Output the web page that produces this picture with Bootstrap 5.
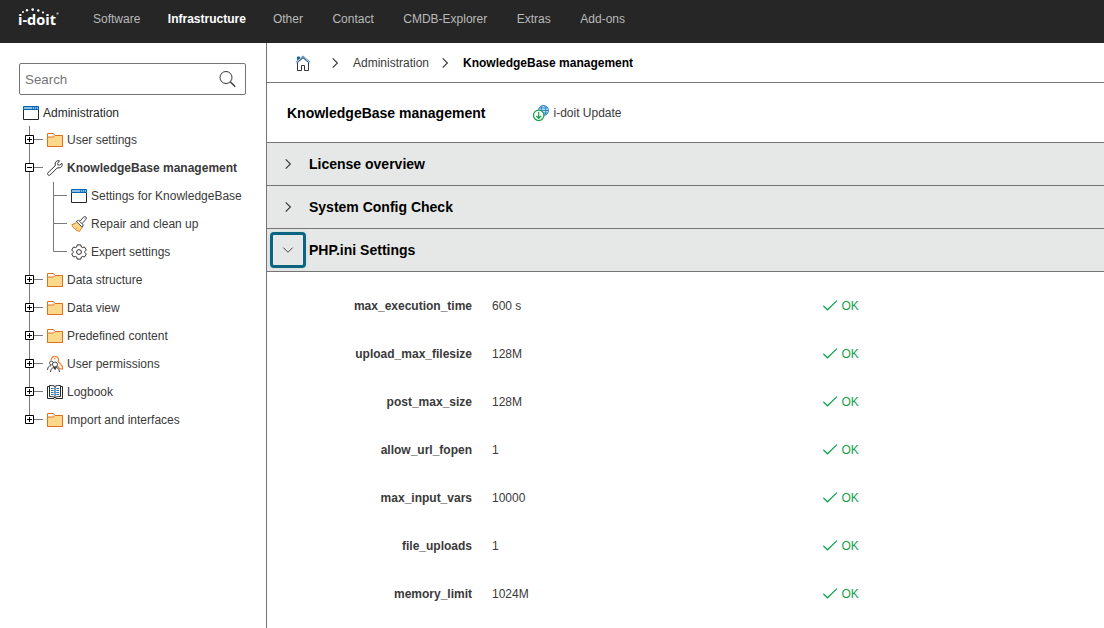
<!DOCTYPE html>
<html lang="en">
<head>
<meta charset="utf-8">
<title>i-doit</title>
<link rel="stylesheet" href="https://cdn.jsdelivr.net/npm/bootstrap@5.3.0/dist/css/bootstrap.min.css">
<script src="https://cdn.jsdelivr.net/npm/bootstrap@5.3.0/dist/js/bootstrap.bundle.min.js"></script>
<style>
body{font:12px/18px "Liberation Sans",Arial,sans-serif;color:#3a3a3a;height:100vh;overflow:hidden}
svg{flex:none;display:block}
.topbar{height:43px;background:#262626;padding:0 0 5px 16px}
.topbar .navbar-nav .nav-link{padding:0;color:#b9b9b9;font-size:12px}
.topbar .navbar-nav .nav-link.active{color:#fff;font-weight:700;margin:0 -1px 0 -.5px}
.topbar .navbar-nav{gap:28px;margin-left:29px}
.topbar .navbar-nav .nav-link:nth-child(n+4){margin-left:1.5px}
.side{width:267px;border-right:1px solid #757575;padding-top:20px}
.searchbox{margin:0 20px 0 19px;height:32px;border:1px solid #757575;border-radius:2px;padding:0 9px 0 5px}
.searchbox input{font-size:13.333px;color:#333;min-width:0;line-height:18px;margin-top:1px}
.searchbox input::placeholder{color:#757575}
.tree li{height:28px;padding-left:25px}
.tree li.root{height:26px;padding-left:23px;margin-top:5px;color:#262626}
.tree span{margin-left:4px;white-space:nowrap}
.crumbs{height:40px;border-bottom:1px solid #757575;padding-left:28px}
.headline{height:60px;border-bottom:1px solid #757575;padding-left:20px}
h1,h2{font-size:14px;font-weight:700;line-height:18px;color:#000;margin:0}
.headline h1{width:246px}
.section-bar{height:43px;background:#e6e8e7;border-bottom:1px solid #757575;padding-left:3px}
.toggle{width:36px;height:36px;border:3px solid transparent;border-radius:4px;background:none;padding:0;margin-right:3px}
.toggle.on{border-color:#0b6580;box-shadow:0 0 5px #0b658018}
.settings{padding-top:10px}
.setting{height:48px}
.setting b{width:205px;text-align:right;margin-right:20px}
.setting .val{width:329.5px}
.setting svg{margin-bottom:2px}
.ok{color:#14a04a}
</style>
</head>
<body class="d-flex flex-column bg-white">
<svg width="0" height="0" class="position-absolute" aria-hidden="true">
<defs>
<symbol id="plus" viewBox="0 0 22 28"><path d="M4.500 0V28M9 13.500H18" stroke="#7a7a7a" fill="none"/><path d="M.5 9.500h8v8h-8z" fill="#fff" stroke="#000"/><path d="M2 13.500h5M4.500 11v5" stroke="#000"/></symbol>
<symbol id="pluslast" viewBox="0 0 22 28"><path d="M4.500 0V10M9 13.500H18" stroke="#7a7a7a" fill="none"/><path d="M.5 9.500h8v8h-8z" fill="#fff" stroke="#000"/><path d="M2 13.500h5M4.500 11v5" stroke="#000"/></symbol>
<symbol id="minus" viewBox="0 0 22 28"><path d="M4.500 0V28M9 13.500H18" stroke="#7a7a7a" fill="none"/><path d="M.5 9.500h8v8h-8z" fill="#fff" stroke="#000"/><path d="M2 13.500h5" stroke="#000"/></symbol>
<symbol id="branch" viewBox="0 0 46 28"><path d="M4.500 0V28M28.500 0V28M28.500 13.500H42" stroke="#7a7a7a" fill="none"/></symbol>
<symbol id="branchlast" viewBox="0 0 46 28"><path d="M4.500 0V28M28.500 0V13.500H42" stroke="#7a7a7a" fill="none"/></symbol>
<symbol id="folder" viewBox="0 0 16 16"><path d="M.5 14.500V1.500H6.500L8 3.500H15.500V14.500z" fill="#fff" stroke="#e2711d"/><path d="M.5 14.500V5H6.500L8 3.500H15.500V14.500z" fill="#fad98b" stroke="#e2711d"/></symbol>
<symbol id="window" viewBox="0 0 16 16"><path d="M.5 4.500V14.500H15.500V4.500" fill="#fff" stroke="#262626"/><path d="M.5 1.500H15.500V4.500H.5z" fill="#83beec" stroke="#0063b1"/><path d="M9.500 2v2M11.500 2v2M13.500 2v2" stroke="#0063b1" stroke-width=".7"/></symbol>
<symbol id="wrench" viewBox="0 0 16 16"><path d="M14.900 3.300 12.600 5.200 10.900 4.800 10.600 3.200 12.500.8C10.100 0 7.600 2 8.300 5L8 6 1.100 12.500C-.4 14.200 1.800 16.400 3.300 14.900L9.800 8.300 11 7.800C14 8.400 16 5.900 14.900 3.300z" fill="#fff" stroke="#333"/></symbol>
<symbol id="brush" viewBox="0 0 16 16"><path d="M5.500 5.800.8 8.800C2 12 5 14.800 8.500 15.400L11.200 11z" fill="#fad98b"/><path d="M5 7 .8 8.800C2 12 5 14.800 8.500 15.400L11 11.500" fill="none" stroke="#e2711d" stroke-width=".9"/><path d="M5 13 6.500 11.500" stroke="#e2711d" stroke-width=".7"/><path d="M5.300 5.500 7.500 4.200 9 5.300 12.700.9C14.300-.2 16.100 1.500 15 3.200L11.200 7.500 12.300 9 11.200 11.200z" fill="#fff" stroke="#333" stroke-width=".9"/><path d="M8.500 5.500 11.300 8M13.500 2.200v.4" stroke="#333" stroke-width=".8"/></symbol>
<symbol id="gear" viewBox="0 0 16 16"><path d="M6.200.9H9.800L10.300 3 11.300 3.600 13.500 3 15.300 6 13.800 7.500V8.500L15.300 10 13.500 13 11.300 12.400 10.300 13 9.800 15.100H6.200L5.700 13 4.700 12.400 2.500 13 .7 10 2.200 8.500V7.500L.7 6 2.500 3 4.700 3.600 5.700 3z" fill="#fff" stroke="#333" stroke-linejoin="round"/><circle cx="8" cy="8" r="2.400" fill="none" stroke="#333"/></symbol>
<symbol id="perm" viewBox="0 0 16 16"><path d="M4.300 4.500C3.600 1 7.500-.5 9.800.8 11.600 2 11.700 4.100 11.100 5.300L15.400 10.300V12.800H13L8.500 8" fill="#fff" stroke="#f08030" stroke-width="1.200"/><path d="M7 2.800h1.500" stroke="#e2711d"/><circle cx="4.400" cy="7" r="1.900" fill="#fff" stroke="#333" stroke-width=".8"/><path d="M.6 14C.5 11 2 9.800 4 9.700" fill="none" stroke="#333" stroke-width=".9"/><circle cx="8" cy="8.500" r="2.500" fill="#fff" stroke="#333" stroke-width=".9"/><path d="M3.600 16C3.700 12.500 5.500 11.500 8 11.500S12.300 12.500 12.400 16M7 11.700 8 13.500 9 11.700" fill="none" stroke="#333"/></symbol>
<symbol id="book" viewBox="0 0 16 16"><path d="M2.500 2.500H.5V14.500H7L8 15.500 9 14.500H15.500V2.500H13.500" fill="#fff" stroke="#262626"/><path d="M8 2.500C7 1.500 5 1.500 2.500 1.500V12.500C5 12.500 7 12.500 8 14 9 12.500 11 12.500 13.500 12.500V1.500C11 1.500 9 1.500 8 2.500V14" fill="#fff" stroke="#262626"/><path d="M4 4.500H6.600M4 6.500H6.600M4 8.500H6.600M4 10.500H6.600M9.400 4.500H12M9.400 6.500H12M9.400 8.500H12M9.400 10.500H12" stroke="#0078d4"/></symbol>
<symbol id="home" viewBox="0 0 16 16"><path d="M2.500 7.500V15.500H6.500V10.500H9.500V15.500H13.500V7.500L8 2.700z" fill="#fff" stroke="#333"/><path d="M2.500 5V2H4.500V3.500" fill="#0063b1" stroke="#0063b1"/><path d="M.8 7.300 8 .9 15.200 7.300M1.600 8 8 2.400 14.400 8" fill="none" stroke="#2b6da8" stroke-width=".8"/></symbol>
<symbol id="right" viewBox="0 0 16 16"><path d="M5.700 3.300 10.400 8 5.700 12.700" fill="none" stroke="#333" stroke-width="1.100"/></symbol>
<symbol id="down" viewBox="0 0 16 16"><path d="M3.300 5.600 8 10.300 12.700 5.600" fill="none" stroke="#444"/></symbol>
<symbol id="update" viewBox="0 0 16 16"><g fill="none" stroke="#1f7fc4" stroke-width=".9"><circle cx="10.500" cy="5.500" r="5" fill="#c5e0f5"/><ellipse cx="10.500" cy="5.500" rx="2.300" ry="5"/><path d="M5.500 5.500H15.500M6.300 3H14.700M6.300 8H14.700"/></g><circle cx="5.700" cy="10.300" r="5.200" fill="#fff" stroke="#14a04a" stroke-width="1.200"/><path d="M5.700 7V13.300M3.300 11 5.700 13.300 8.100 11" fill="none" stroke="#14a04a" stroke-width="1.200"/></symbol>
<symbol id="check" viewBox="0 0 16 16"><path d="M1.300 8.700 5.500 12.800 14.900 3.600" fill="none" stroke="#14a04a" stroke-width="1.200"/></symbol>
</defs></svg>

<nav class="topbar navbar navbar-expand flex-nowrap justify-content-start flex-shrink-0">
<svg width="48" height="26" viewBox="0 0 48 26"><text x="2" y="19" textLength="38" lengthAdjust="spacingAndGlyphs" font-family="Open Sans,sans-serif" font-weight="700" font-size="15" fill="#fff">i-doit</text>
<g fill="#fff"><circle cx="7" cy="6" r="1"/><circle cx="11" cy="4.300" r="1.200"/><circle cx="16.700" cy="3.600" r="1.300"/><circle cx="22.300" cy="4.500" r="1.200"/><circle cx="27" cy="6.500" r="1.100"/></g><circle cx="41.500" cy="7.500" r="1.200" fill="#999"/></svg>
<div class="navbar-nav">
<a class="nav-link">Software</a><a class="nav-link active">Infrastructure</a><a class="nav-link">Other</a><a class="nav-link">Contact</a><a class="nav-link">CMDB-Explorer</a><a class="nav-link">Extras</a><a class="nav-link">Add-ons</a>
</div>
</nav>

<div class="d-flex flex-grow-1">
<aside class="side flex-shrink-0">
<div class="searchbox d-flex align-items-center"><input class="form-control border-0 p-0 shadow-none bg-transparent" placeholder="Search"><svg width="17" height="17" viewBox="0 0 17 17"><circle cx="7" cy="6.500" r="6" fill="none" stroke="#333"/><path d="M11.300 10.800 16.200 15.700" stroke="#333" stroke-width="1.300"/></svg></div>
<ul class="tree list-unstyled mb-0">
<li class="root d-flex align-items-center"><svg width="16" height="16"><use href="#window"/></svg><span>Administration</span></li>
<li class="d-flex align-items-center"><svg width="22" height="28"><use href="#plus"/></svg><svg width="16" height="16"><use href="#folder"/></svg><span>User settings</span></li>
<li class="d-flex align-items-center"><svg width="22" height="28"><use href="#minus"/></svg><svg width="16" height="16"><use href="#wrench"/></svg><span class="fw-bold">KnowledgeBase management</span></li>
<li class="d-flex align-items-center"><svg width="46" height="28"><use href="#branch"/></svg><svg width="16" height="16"><use href="#window"/></svg><span>Settings for KnowledgeBase</span></li>
<li class="d-flex align-items-center"><svg width="46" height="28"><use href="#branch"/></svg><svg width="16" height="16"><use href="#brush"/></svg><span>Repair and clean up</span></li>
<li class="d-flex align-items-center"><svg width="46" height="28"><use href="#branchlast"/></svg><svg width="16" height="16"><use href="#gear"/></svg><span>Expert settings</span></li>
<li class="d-flex align-items-center"><svg width="22" height="28"><use href="#plus"/></svg><svg width="16" height="16"><use href="#folder"/></svg><span>Data structure</span></li>
<li class="d-flex align-items-center"><svg width="22" height="28"><use href="#plus"/></svg><svg width="16" height="16"><use href="#folder"/></svg><span>Data view</span></li>
<li class="d-flex align-items-center"><svg width="22" height="28"><use href="#plus"/></svg><svg width="16" height="16"><use href="#folder"/></svg><span>Predefined content</span></li>
<li class="d-flex align-items-center"><svg width="22" height="28"><use href="#plus"/></svg><svg width="16" height="16"><use href="#perm"/></svg><span>User permissions</span></li>
<li class="d-flex align-items-center"><svg width="22" height="28"><use href="#plus"/></svg><svg width="16" height="16"><use href="#book"/></svg><span>Logbook</span></li>
<li class="d-flex align-items-center"><svg width="22" height="28"><use href="#pluslast"/></svg><svg width="16" height="16"><use href="#folder"/></svg><span>Import and interfaces</span></li>
</ul>
</aside>

<main class="flex-grow-1">
<div class="crumbs d-flex align-items-center"><svg width="16" height="16"><use href="#home"/></svg><svg width="16" height="16" style="margin:0 10px 0 16px"><use href="#right"/></svg><span>Administration</span><svg width="16" height="16" style="margin:0 10px 0 8px"><use href="#right"/></svg><b class="text-black">KnowledgeBase management</b></div>
<div class="headline d-flex align-items-center"><h1>KnowledgeBase management</h1><svg width="16" height="16"><use href="#update"/></svg><span style="margin-left:4.500px">i-doit Update</span></div>
<div class="section-bar d-flex align-items-center"><button class="toggle d-flex align-items-center justify-content-center"><svg width="16" height="16"><use href="#right"/></svg></button><h2>License overview</h2></div>
<div class="section-bar d-flex align-items-center"><button class="toggle d-flex align-items-center justify-content-center"><svg width="16" height="16"><use href="#right"/></svg></button><h2>System Config Check</h2></div>
<div class="section-bar d-flex align-items-center"><button class="toggle on d-flex align-items-center justify-content-center"><svg width="16" height="16"><use href="#down"/></svg></button><h2>PHP.ini Settings</h2></div>
<div class="settings">
<div class="setting d-flex align-items-center"><b>max_execution_time</b><span class="val">600 s</span><svg width="16" height="16"><use href="#check"/></svg><span class="ok ms-1">OK</span></div>
<div class="setting d-flex align-items-center"><b>upload_max_filesize</b><span class="val">128M</span><svg width="16" height="16"><use href="#check"/></svg><span class="ok ms-1">OK</span></div>
<div class="setting d-flex align-items-center"><b>post_max_size</b><span class="val">128M</span><svg width="16" height="16"><use href="#check"/></svg><span class="ok ms-1">OK</span></div>
<div class="setting d-flex align-items-center"><b>allow_url_fopen</b><span class="val">1</span><svg width="16" height="16"><use href="#check"/></svg><span class="ok ms-1">OK</span></div>
<div class="setting d-flex align-items-center"><b>max_input_vars</b><span class="val">10000</span><svg width="16" height="16"><use href="#check"/></svg><span class="ok ms-1">OK</span></div>
<div class="setting d-flex align-items-center"><b>file_uploads</b><span class="val">1</span><svg width="16" height="16"><use href="#check"/></svg><span class="ok ms-1">OK</span></div>
<div class="setting d-flex align-items-center"><b>memory_limit</b><span class="val">1024M</span><svg width="16" height="16"><use href="#check"/></svg><span class="ok ms-1">OK</span></div>
</div>
</main>
</div>
</body>
</html>
